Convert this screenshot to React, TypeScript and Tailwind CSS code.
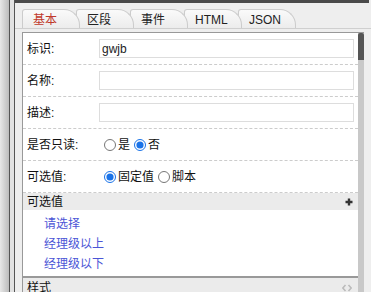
import React from "react"

const tabs = [
  { label: "基本", active: true, z: "z-50" },
  { label: "区段", active: false, z: "z-40" },
  { label: "事件", active: false, z: "z-30" },
  { label: "HTML", active: false, z: "z-20" },
  { label: "JSON", active: false, z: "z-10" },
]

const options = ["请选择", "经理级以上", "经理级以下"]

function Row({ label, children }: { label: string; children: React.ReactNode }) {
  return (
    <div className="h-[32px] shrink-0 flex items-center border-b border-dashed border-[#cccccc]">
      <div className="w-[76px] shrink-0 pl-[4px] text-[#111]">{label}</div>
      {children}
    </div>
  )
}

function TextInput({ value = "" }: { value?: string }) {
  return (
    <input
      readOnly
      value={value}
      className="w-[255px] h-[19px] border border-[#dddddd] bg-white px-[2px] text-[12px] text-[#222] outline-none"
    />
  )
}

function Radio({ label, checked }: { label: string; checked?: boolean }) {
  return (
    <label className="flex items-center ml-[5px] mr-[-1px]">
      <input type="radio" readOnly checked={!!checked} className="m-0 w-[12px] h-[12px] accent-[#1a73e8]" />
      <span className="ml-[2px] text-[#111]">{label}</span>
    </label>
  )
}

export default function App() {
  return (
    <div
      className="w-[371px] h-[292px] flex overflow-hidden text-[12px] leading-none"
      style={{ fontFamily: '"Liberation Sans", "Noto Sans CJK SC", sans-serif' }}
    >
      <div className="w-[9px] bg-gradient-to-r from-[#e8e8e8] to-[#bcbcbc]" />
      <div className="w-px bg-[#555555]" />
      <div className="w-[4px] bg-[#e2e2e2]" />
      <div className="w-px bg-[#555555]" />
      <div className="flex-1 flex flex-col bg-[#eeeeee] min-w-0">
        <div className="h-[3px] shrink-0 bg-[#4a4a4a] mr-[2px]" />
        <div className="h-[26px] shrink-0 pt-[6px] pl-[7px] border-b border-[#cfcfcf] flex">
          {tabs.map((t, i) => (
            <div
              key={t.label}
              className={`relative ${t.z} ${i > 0 ? "-ml-[4px]" : ""} w-[58px] h-[19px] flex items-center pt-[2px] pl-[10px] border border-b-0 border-[#cccccc] rounded-tl-[3px] rounded-tr-[16px] bg-gradient-to-b from-[#fafafa] to-[#ececec] ${t.active ? "text-[#c0392b]" : "text-[#222]"}`}
            >
              {t.label}
            </div>
          ))}
        </div>
        <div className="mt-[3px] ml-[7px] mr-[7px] flex-1 flex border-t border-l border-[#999999] min-h-0">
          <div className="flex-1 flex flex-col bg-white min-w-0">
            <Row label="标识:">
              <TextInput value="gwjb" />
            </Row>
            <Row label="名称:">
              <TextInput />
            </Row>
            <Row label="描述:">
              <TextInput />
            </Row>
            <Row label="是否只读:">
              <Radio label="是" />
              <Radio label="否" checked />
            </Row>
            <Row label="可选值:">
              <Radio label="固定值" checked />
              <Radio label="脚本" />
            </Row>
            <div className="h-[17px] shrink-0 bg-[#ebebeb] flex items-center justify-between pl-[4px] pr-[5px] text-[#111]">
              <span>可选值</span>
              <svg width="8" height="8" viewBox="0 0 8 8">
                <path d="M4 0.5v7M0.5 4h7" stroke="#333" strokeWidth="2.4" />
              </svg>
            </div>
            <div className="h-[66px] shrink-0 pt-[4px] pl-[21px] text-[#4b55d6] leading-[20px]">
              {options.map((o) => (
                <div key={o}>{o}</div>
              ))}
            </div>
            <div className="h-[20px] shrink-0 border-t-2 border-[#999999] bg-[#ebebeb] flex items-start justify-between pt-[4px] pl-[4px] pr-[6px] text-[#111]">
              <span>样式</span>
              <svg width="10" height="8" viewBox="0 0 10 8" className="mt-[2px]">
                <path d="M3.5 1L0.8 4l2.7 3M6.5 1l2.7 3-2.7 3" stroke="#bbbbbb" strokeWidth="1.6" fill="none" />
              </svg>
            </div>
          </div>
          <div className="w-[6px] shrink-0 bg-[#c8c8c8]">
            <div className="h-[27px] bg-[#555555] rounded-t-[2px]" />
          </div>
        </div>
      </div>
    </div>
  )
}
